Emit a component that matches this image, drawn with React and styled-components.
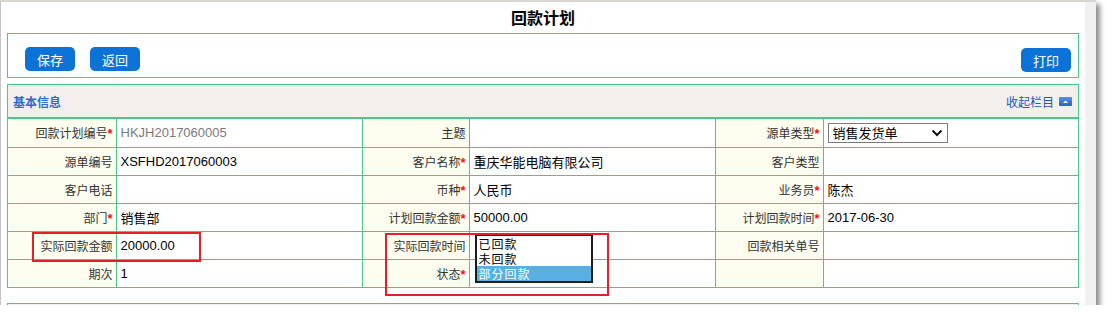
import React from 'react';
import styled, { createGlobalStyle } from 'styled-components';

const GREEN = '#48c985';

const GlobalStyle = createGlobalStyle`
  html, body {
    margin: 0;
    padding: 0;
    background: #fff;
  }
  body {
    font-family: "Noto Sans CJK SC", "Liberation Sans", sans-serif;
    font-size: 12px;
    color: #333;
  }
`;

const Window = styled.div`
  width: 1096px;
  height: 305px;
  box-sizing: border-box;
  border-top: 2px solid #d8d4d0;
  border-left: 1px solid #c4c4c4;
  display: flex;
  overflow: hidden;
  background: #fff;
  box-shadow: 4px 4px 5px rgba(0, 0, 0, 0.45);
`;

const Main = styled.div`
  width: 1084px;
  box-sizing: border-box;
  padding: 0 6px;
`;

const ScrollStrip = styled.div`
  width: 11px;
  background: #f1f1f1;
`;

const Title = styled.h1`
  margin: 0;
  height: 31px;
  line-height: 31px;
  text-align: center;
  font-size: 16px;
  font-weight: bold;
  color: #000;
`;

const Toolbar = styled.div`
  height: 45px;
  box-sizing: border-box;
  border: 1px solid ${GREEN};
  display: flex;
  align-items: flex-start;
  gap: 15px;
  padding: 13px 7px 0 17px;
`;

const Button = styled.button`
  width: 50px;
  height: 24px;
  border: none;
  border-radius: 5px;
  background: #0b73d8;
  color: #fff;
  font-family: "Noto Sans CJK SC", sans-serif;
  font-size: 13px;
  padding: 0;
  margin-left: ${(p) => (p.$right ? 'auto' : '0')};
  margin-top: ${(p) => (p.$right ? '1px' : '0')};
`;

const Section = styled.div`
  position: relative;
  margin-top: 6px;
  border: 1px solid ${GREEN};
`;

const SectionHead = styled.div`
  height: 32px;
  background: #f2efec;
  border-bottom: 2px solid ${GREEN};
  display: flex;
  align-items: center;
  justify-content: space-between;
  padding: 0 6px 0 5px;
`;

const HeadTitle = styled.span`
  font-weight: bold;
  font-size: 12px;
  color: #2d6bd0;
`;

const Collapse = styled.span`
  display: flex;
  align-items: center;
  gap: 5px;
  color: #1d58bd;
  font-size: 12px;
`;

const Table = styled.table`
  width: 100%;
  border-collapse: collapse;
  table-layout: fixed;
  border-style: hidden;
`;

const Tr = styled.tr`
  height: 28px;
`;

const Label = styled.td`
  border: 1px solid ${GREEN};
  background: #fdfdf0;
  text-align: right;
  padding: 0 3px 0 0;
  font-size: 12px;
  color: #333;
  white-space: nowrap;
`;

const Value = styled.td`
  position: relative;
  border: 1px solid ${GREEN};
  background: #fff;
  padding: 0 4px;
  font-family: "Liberation Sans", "Noto Sans CJK SC", sans-serif;
  font-size: 13px;
  color: ${(p) => (p.$muted ? '#7a7a7a' : '#000')};
  white-space: nowrap;
`;

const Star = styled.span`
  color: #f01010;
  font-family: "Liberation Sans", sans-serif;
  font-weight: bold;
  font-size: 13px;
`;

const SelectBox = styled.div`
  width: 120px;
  height: 20px;
  box-sizing: border-box;
  border: 1px solid #7a7a7a;
  display: flex;
  align-items: center;
  justify-content: space-between;
  padding: 0 4px 0 4px;
  font-family: "Noto Sans CJK SC", sans-serif;
  font-size: 13px;
  color: #000;
`;

const ListBox = styled.div`
  position: absolute;
  top: 2px;
  left: 5px;
  width: 118px;
  height: 49px;
  box-sizing: border-box;
  border: 2px solid #1c1c1c;
  background: #fff;
  font-family: "Noto Sans CJK SC", sans-serif;
  font-size: 12px;
  z-index: 2;
`;

const Option = styled.div`
  height: 15px;
  line-height: 15px;
  padding-left: 2px;
  overflow: hidden;
  letter-spacing: 1px;
  background: ${(p) => (p.$selected ? '#58b0e2' : 'transparent')};
  color: ${(p) => (p.$selected ? '#fff' : '#000')};
`;

const Mark = styled.div`
  position: absolute;
  border: 2px solid #e3202a;
  pointer-events: none;
  z-index: 3;
`;

const NextSection = styled.div`
  margin-top: 15px;
  height: 20px;
  border: 1px solid ${GREEN};
  background: #f2efec;
`;

const CollapseIcon = () => (
  <svg width="13" height="9" viewBox="0 0 13 9">
    <defs>
      <linearGradient id="ci" x1="0" y1="0" x2="0" y2="1">
        <stop offset="0" stopColor="#5a92e0" />
        <stop offset="1" stopColor="#2a62c0" />
      </linearGradient>
    </defs>
    <rect x="0" y="0" width="13" height="9" rx="1" fill="url(#ci)" />
    <path d="M4 6 L6.5 3.5 L9 6 Z" fill="#fff" />
  </svg>
);

const Chevron = () => (
  <svg width="12" height="8" viewBox="0 0 12 8">
    <path d="M1.5 1.5 L6 6 L10.5 1.5" fill="none" stroke="#111" strokeWidth="2" />
  </svg>
);

const L = ({ children, req }) => (
  <Label>
    {children}
    {req && <Star>*</Star>}
  </Label>
);

const App = () => {
  const statusList = ['已回款', '未回款', '部分回款'];

  return (
    <>
      <GlobalStyle />
      <Window>
        <Main>
          <Title>回款计划</Title>
          <Toolbar>
            <Button>保存</Button>
            <Button>返回</Button>
            <Button $right>打印</Button>
          </Toolbar>
          <Section>
            <SectionHead>
              <HeadTitle>基本信息</HeadTitle>
              <Collapse>
                收起栏目
                <CollapseIcon />
              </Collapse>
            </SectionHead>
            <Table>
              <colgroup>
                <col style={{ width: 108 }} />
                <col style={{ width: 246 }} />
                <col style={{ width: 107 }} />
                <col style={{ width: 246 }} />
                <col style={{ width: 108 }} />
                <col />
              </colgroup>
              <tbody>
                <Tr>
                  <L req>回款计划编号</L>
                  <Value $muted>HKJH2017060005</Value>
                  <L>主题</L>
                  <Value />
                  <L req>源单类型</L>
                  <Value>
                    <SelectBox>
                      销售发货单
                      <Chevron />
                    </SelectBox>
                  </Value>
                </Tr>
                <Tr>
                  <L>源单编号</L>
                  <Value>XSFHD2017060003</Value>
                  <L req>客户名称</L>
                  <Value>重庆华能电脑有限公司</Value>
                  <L>客户类型</L>
                  <Value />
                </Tr>
                <Tr>
                  <L>客户电话</L>
                  <Value />
                  <L req>币种</L>
                  <Value>人民币</Value>
                  <L req>业务员</L>
                  <Value>陈杰</Value>
                </Tr>
                <Tr>
                  <L req>部门</L>
                  <Value>销售部</Value>
                  <L req>计划回款金额</L>
                  <Value>50000.00</Value>
                  <L req>计划回款时间</L>
                  <Value>2017-06-30</Value>
                </Tr>
                <Tr>
                  <L>实际回款金额</L>
                  <Value>20000.00</Value>
                  <L>实际回款时间</L>
                  <Value>
                    <ListBox>
                      {statusList.map((s) => (
                        <Option key={s} $selected={s === '部分回款'}>
                          {s}
                        </Option>
                      ))}
                    </ListBox>
                  </Value>
                  <L>回款相关单号</L>
                  <Value />
                </Tr>
                <Tr>
                  <L>期次</L>
                  <Value>1</Value>
                  <L req>状态</L>
                  <Value />
                  <Label />
                  <Value />
                </Tr>
              </tbody>
            </Table>
            <Mark style={{ left: 24, top: 147, width: 165, height: 26 }} />
            <Mark style={{ left: 377, top: 148, width: 220, height: 59 }} />
          </Section>
          <NextSection />
        </Main>
        <ScrollStrip />
      </Window>
    </>
  );
};

export default App;
